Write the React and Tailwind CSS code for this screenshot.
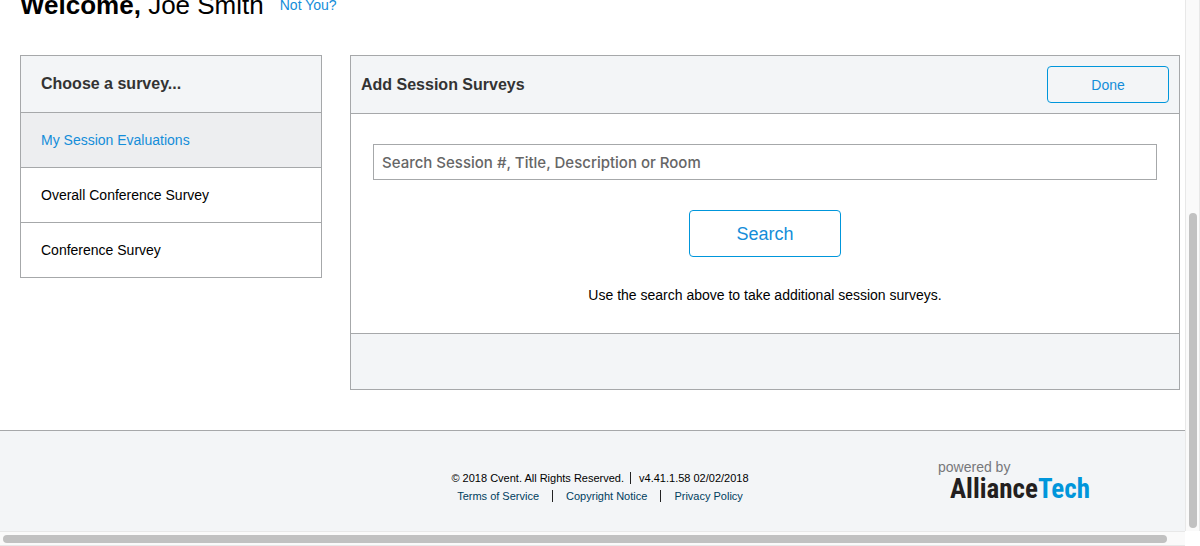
import React, { useState } from "react";

const surveys = ["My Session Evaluations", "Overall Conference Survey", "Conference Survey"];

function Sidebar() {
  const [active, setActive] = useState(0);
  return (
    <nav aria-label="Surveys" className="w-[302px] shrink-0 border border-[#a6a8aa]">
      <h2 className="flex h-14 items-center bg-[#f3f5f7] px-5 text-base font-bold text-[#333]">
        Choose a survey...
      </h2>
      <ul>
        {surveys.map((name, i) => (
          <li key={name} className="border-t border-[#a6a8aa]">
            <a
              href="#"
              onClick={(e) => {
                e.preventDefault();
                setActive(i);
              }}
              className={
                i === active
                  ? "flex h-[54px] items-center bg-[#edeef0] px-5 text-sm text-[#148dd9]"
                  : "flex h-[54px] items-center px-5 text-sm text-black"
              }
            >
              {name}
            </a>
          </li>
        ))}
      </ul>
    </nav>
  );
}

function SearchPanel() {
  return (
    <section className="min-w-0 flex-1 border border-[#a6a8aa]">
      <header className="flex items-center justify-between border-b border-[#a6a8aa] bg-[#f3f5f7] p-2.5">
        <h2 className="text-base font-bold text-[#333]">Add Session Surveys</h2>
        <button type="button" className="h-[37px] w-[122px] rounded border border-[#0096db] text-sm text-[#148dd9]">
          Done
        </button>
      </header>
      <form
        onSubmit={(e) => e.preventDefault()}
        className="flex flex-col items-center px-[22px] pt-[30px] pb-7"
      >
        <input
          type="text"
          aria-label="Search sessions"
          placeholder="Search Session #, Title, Description or Room"
          className="h-9 w-full border border-[#a6a8aa] bg-white px-2 font-['Inter','Roboto',sans-serif] text-[15px] font-medium text-black placeholder:text-[#666]"
        />
        <button
          type="submit"
          className="mt-[30px] h-[47px] w-[152px] rounded border border-[#0096db] text-lg text-[#148dd9]"
        >
          Search
        </button>
        <p className="mt-7 text-sm text-black">Use the search above to take additional session surveys.</p>
      </form>
      <div className="h-14 border-t border-[#a6a8aa] bg-[#f3f5f7]" />
    </section>
  );
}

function Footer() {
  return (
    <footer className="mt-10 grid flex-1 grid-cols-[1fr_auto_1fr] items-start border-t border-[#a6a8aa] bg-[#f3f5f7]">
      <div className="col-start-2 pt-[38px] text-[11px] leading-[18px] text-black">
        <div className="flex items-center justify-center">
          <span className="pr-1.5">© 2018 Cvent. All Rights Reserved.</span>
          <span className="h-3 w-px bg-[#222]" />
          <span className="pl-2">v4.41.1.58 02/02/2018</span>
        </div>
        <div className="flex items-center justify-center text-[#00405e]">
          <a href="#">Terms of Service</a>
          <span className="mx-[13px] h-3 w-px bg-[#222]" />
          <a href="#">Copyright Notice</a>
          <span className="mx-[13px] h-3 w-px bg-[#222]" />
          <a href="#">Privacy Policy</a>
        </div>
      </div>
      <div className="justify-self-end pt-7 pr-[110px]">
        <p className="text-sm leading-4 text-[#77787b]">powered by</p>
        <p className="pl-3 font-['Roboto_Condensed','Open_Sans_Condensed','Noto_Sans_Condensed','Liberation_Sans',sans-serif] text-[27px] leading-7 font-bold text-[#231f20]">
          Alliance<span className="text-[#0096db]">Tech</span>
        </p>
      </div>
    </footer>
  );
}

function Scrollbars() {
  return (
    <div aria-hidden="true">
      <div className="fixed top-0 right-0 bottom-[15px] w-[15px] border-x border-[#e8e8e8] bg-[#fafafa]">
        <div className="absolute top-[40.2%] right-[2px] bottom-[3px] w-2 rounded-full bg-[#c1c1c1]" />
      </div>
      <div className="fixed right-[15px] bottom-0 left-0 h-[15px] border-y border-[#e8e8e8] bg-[#fafafa]">
        <div className="absolute top-[3px] right-[18px] left-[3px] h-2 rounded-full bg-[#c1c1c1]" />
      </div>
      <div className="fixed right-0 bottom-0 size-[15px] bg-white" />
    </div>
  );
}

export default function App() {
  return (
    <div className="flex min-h-screen flex-col overflow-hidden bg-white font-['Liberation_Sans',Arial,sans-serif]">
      <div className="-mt-[11px] flex items-center gap-4 px-5">
        <h1 className="text-[26px] leading-8 text-black">
          <b>Welcome,</b> Joe Smith
        </h1>
        <a href="#" className="text-sm text-[#148dd9]">
          Not You?
        </a>
      </div>
      <main className="mt-[34px] flex items-start gap-7 px-5">
        <Sidebar />
        <SearchPanel />
      </main>
      <Footer />
      <Scrollbars />
    </div>
  );
}
